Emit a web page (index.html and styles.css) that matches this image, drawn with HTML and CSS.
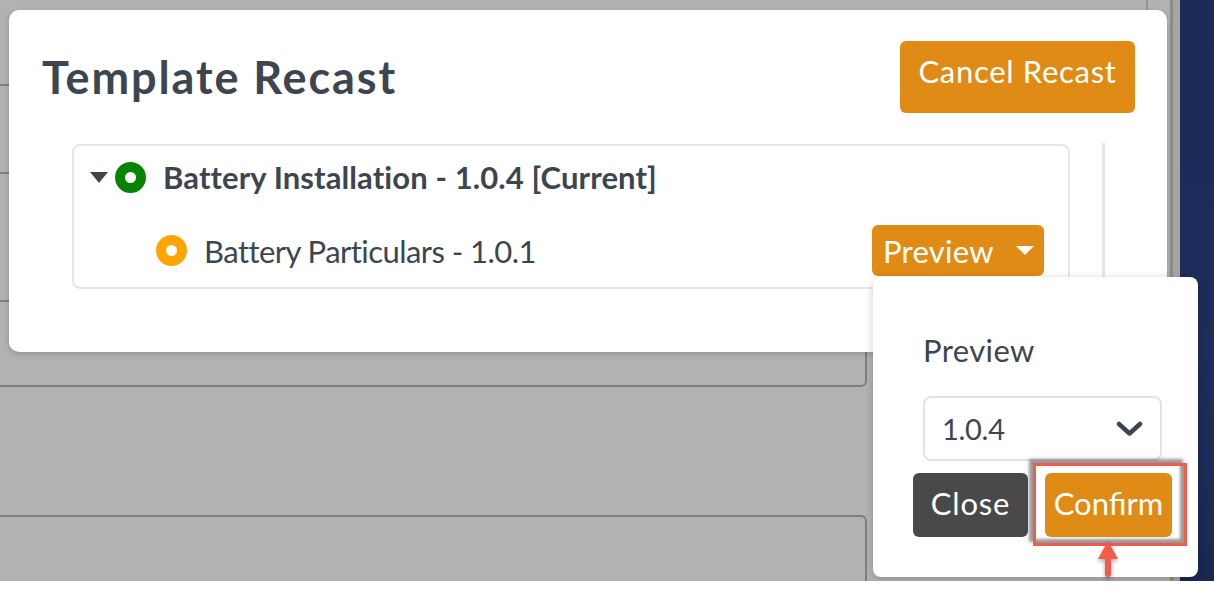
FILE: index.html
```html
<!DOCTYPE html>
<html lang="en">
<head>
    <meta charset="UTF-8">
    <meta name="viewport" content="width=device-width, initial-scale=1.0">
    <title>Template Recast</title>
    <link rel="stylesheet" href="styles.css">
</head>
<body>
    <div class="screen">
        <!-- dimmed app behind the modal -->
        <div class="app">
            <div class="app-header"></div>
            <div class="panel panel-top">
                <div class="panel-row row-1"></div>
                <div class="panel-row row-2"></div>
                <div class="panel-row row-3"></div>
            </div>
            <div class="panel panel-bottom"></div>
        </div>
        <div class="app-scroll"></div>
        <div class="sidebar"></div>

        <div class="modal">
            <div class="modal-head">
                <h1>Template Recast</h1>
                <button class="btn btn-orange btn-cancel">Cancel Recast</button>
            </div>
            <div class="modal-body">
                <div class="tree">
                    <div class="node node-parent">
                        <span class="caret"></span>
                        <span class="dot dot-green"></span>
                        <span class="node-label">Battery Installation - 1.0.4 [Current]</span>
                    </div>
                    <div class="node node-child">
                        <span class="dot dot-orange"></span>
                        <span class="node-label">Battery Particulars - 1.0.1</span>
                        <button class="btn btn-orange btn-preview">Preview <span class="caret caret-white"></span></button>
                    </div>
                </div>
                <div class="scroll-track"></div>
            </div>
        </div>

        <div class="popover">
            <div class="form-group">
                <label for="version">Preview</label>
                <div class="select" id="version">
                    <span>1.0.4</span>
                    <svg width="27" height="16" viewBox="0 0 27 16">
                        <polyline points="3,3 13.5,12.5 24,3" fill="none" stroke="#3d4650" stroke-width="4.5" stroke-linecap="round" stroke-linejoin="round"/>
                    </svg>
                </div>
            </div>
            <div class="popover-actions">
                <button class="btn btn-dark btn-close">Close</button>
                <button class="btn btn-orange btn-confirm">Confirm</button>
            </div>
        </div>

        <!-- screenshot annotation -->
        <div class="highlight"></div>
        <svg class="arrow" width="24" height="40" viewBox="0 0 24 40">
            <polygon points="12,1 22,19 2,19" fill="#f25a4a"/>
            <rect x="9" y="15" width="6" height="22" rx="3" fill="#f25a4a"/>
        </svg>
    </div>
</body>
</html>
```

FILE: styles.css
```css
body {
    margin: 0;
    font-family: Lato, "Open Sans", sans-serif;
    background-color: #fff;
    color: #3d4650;
}

.screen {
    position: relative;
    display: flex;
    height: 581px;
    overflow: hidden;
}

/* background app */
.app {
    width: 1170px;
    background-color: #b2b2b2;
    display: flex;
    flex-direction: column;
    overflow: hidden;
}

.app-header {
    flex: 0 0 84px;
    width: 1148px;
    box-sizing: border-box;
    border-right: 2px solid #959595;
}

.panel {
    box-sizing: border-box;
    width: 877px;
    margin-left: -10px;
    border: 2px solid #7f7f7f;
    border-radius: 6px;
}

.panel-row {
    box-sizing: border-box;
    border-bottom: 2px solid #7f7f7f;
}

.row-1 { height: 88px; }
.row-2 { height: 128px; }
.row-3 { height: 83px; border-bottom: none; }

.panel-bottom {
    margin-top: 128px;
    flex: 0 0 120px;
}

.app-scroll {
    box-sizing: border-box;
    width: 10px;
    background-color: #a5a5a5;
    border-left: 3px solid #8c8c8c;
}

.sidebar {
    flex: 1;
    background: linear-gradient(180deg, #1b2a56, #1e2d5c 60%, #1a2852);
}

/* buttons */
.btn {
    font-family: inherit;
    border: none;
    color: #fff;
    cursor: pointer;
    border-radius: 6px;
    padding: 0;
}

.btn-orange {
    background-color: #df8b15;
}

.btn-dark {
    background-color: #494949;
}

/* modal */
.modal {
    position: absolute;
    left: 9px;
    top: 10px;
    width: 1158px;
    height: 342px;
    box-sizing: border-box;
    background-color: #fff;
    border-radius: 10px;
    box-shadow: 0 2px 6px rgba(0, 0, 0, 0.18);
    padding: 31px 32px 0 33px;
}

.modal-head {
    display: flex;
    justify-content: space-between;
    align-items: center;
}

.modal-head h1 {
    margin: 0;
    font-size: 45px;
    font-weight: 700;
    letter-spacing: 1.9px;
    color: #3d4650;
}

.btn-cancel {
    width: 235px;
    height: 72px;
    padding-bottom: 12px;
    font-size: 31px;
    letter-spacing: 0.7px;
}

.modal-body {
    display: flex;
    align-items: flex-start;
    margin-top: 31px;
    padding-left: 30px;
}

.tree {
    box-sizing: border-box;
    width: 998px;
    height: 145px;
    border: 2px solid #e6e6e6;
    border-radius: 8px;
    padding: 10px 24px 0 16px;
}

.node {
    display: flex;
    align-items: center;
}

.node-parent {
    height: 42px;
}

.node-child {
    margin-top: 27px;
    margin-left: 66px;
}

.node-label {
    font-size: 31px;
    margin-left: 17px;
    letter-spacing: -0.55px;
}

.node-parent .node-label {
    font-weight: 700;
    letter-spacing: 0.1px;
}

.caret {
    width: 0;
    height: 0;
    border-left: 9px solid transparent;
    border-right: 9px solid transparent;
    border-top: 11px solid #3d4650;
    margin-right: 7px;
}

.caret-white {
    border-top-color: #fff;
    border-top-width: 9px;
    margin: 0 0 0 22px;
}

.dot {
    box-sizing: border-box;
    width: 31px;
    height: 31px;
    border-radius: 50%;
    border: 10px solid;
    background-color: #fff;
}

.dot-green { border-color: #078307; }
.dot-orange { border-color: #ffa500; }

.btn-preview {
    margin-left: auto;
    display: inline-flex;
    align-items: center;
    height: 51px;
    padding: 0 10px 0 11px;
    font-size: 31px;
    letter-spacing: 0.3px;
}

.scroll-track {
    width: 3px;
    height: 134px;
    margin-left: 32px;
    margin-top: -1px;
    background-color: #e6e6e6;
}

/* popover */
.popover {
    position: absolute;
    left: 873px;
    top: 277px;
    width: 325px;
    height: 300px;
    box-sizing: border-box;
    background-color: #fff;
    border-radius: 8px;
    box-shadow: 0 2px 8px rgba(0, 0, 0, 0.2);
    padding: 55px 26px 0 40px;
}

.form-group {
    padding: 0 10px;
}

.form-group label {
    display: block;
    font-size: 31px;
    line-height: 37px;
    letter-spacing: 0.4px;
    margin-bottom: 27px;
}

.select {
    box-sizing: border-box;
    height: 65px;
    border: 2px solid #e3e3e3;
    border-radius: 8px;
    display: flex;
    align-items: center;
    justify-content: space-between;
    padding: 0 17px;
    font-size: 29px;
    letter-spacing: -0.3px;
}

.popover-actions {
    display: flex;
    gap: 17px;
    margin-top: 12px;
}

.btn-close {
    width: 115px;
    height: 64px;
    padding-bottom: 4px;
    font-size: 31px;
    letter-spacing: 0.8px;
}

.btn-confirm {
    width: 127px;
    height: 64px;
    padding-bottom: 4px;
    font-size: 31px;
}

/* annotation */
.highlight {
    position: absolute;
    left: 1033px;
    top: 463px;
    width: 154px;
    height: 83px;
    box-sizing: border-box;
    border: 3px solid #f25a4a;
    box-shadow: -4px -4px 3px rgba(0, 0, 0, 0.4), inset -4px -4px 3px rgba(0, 0, 0, 0.4);
}

.arrow {
    position: absolute;
    left: 1096px;
    top: 540px;
    filter: drop-shadow(0 2px 2px rgba(0, 0, 0, 0.35));
}
```
